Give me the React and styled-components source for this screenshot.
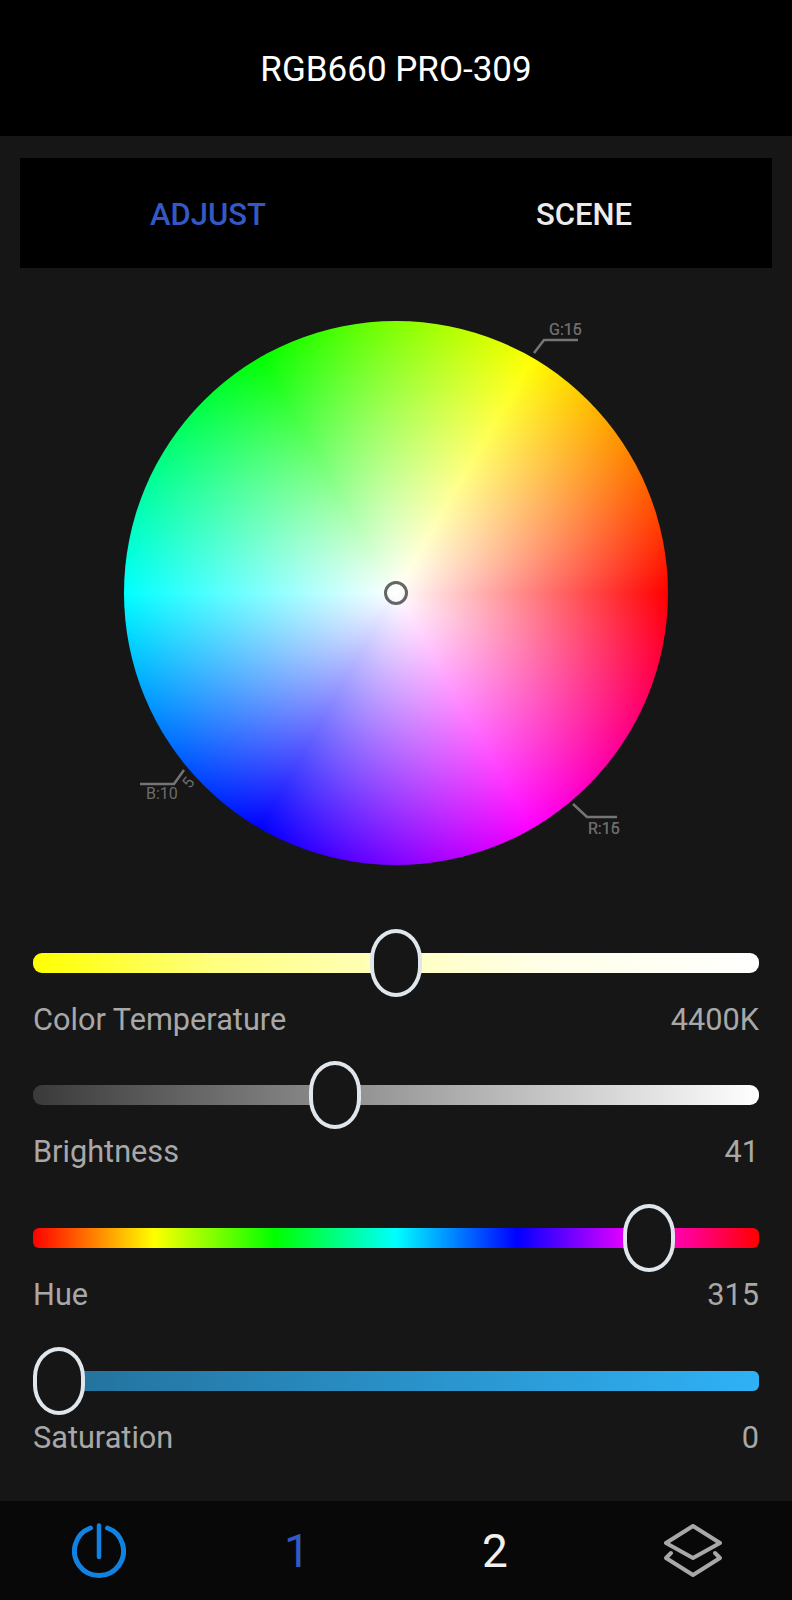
import styled, { createGlobalStyle } from 'styled-components';

const GlobalStyle = createGlobalStyle`
  html, body {
    margin: 0;
    padding: 0;
    background: #161616;
  }
  body {
    font-family: Roboto, "Liberation Sans", sans-serif;
  }
`;

const Page = styled.div`
  width: 792px;
  height: 1600px;
  display: flex;
  flex-direction: column;
  background: #161616;
  overflow: hidden;
`;

const Header = styled.header`
  height: 136px;
  box-sizing: border-box;
  padding-top: 2px;
  flex: none;
  display: flex;
  align-items: center;
  justify-content: center;
  background: #000;
  color: #fff;
  font-size: 35px;
  line-height: 1;
`;

const Tabs = styled.nav`
  flex: none;
  height: 110px;
  margin: 22px 20px 0;
  display: grid;
  grid-template-columns: 1fr 1fr;
  background: #000;
`;

const Tab = styled.div`
  display: flex;
  align-items: center;
  justify-content: center;
  padding-top: 2px;
  font-size: 31px;
  font-weight: 500;
  color: ${({ $active }) => ($active ? '#3359c6' : '#ececec')};
`;

const WheelStage = styled.section`
  position: relative;
  flex: none;
  height: 661px;
  padding-top: 53px;
  box-sizing: border-box;
  display: flex;
  justify-content: center;
  align-items: flex-start;
`;

const Wheel = styled.div`
  width: 544px;
  height: 544px;
  border-radius: 50%;
  display: flex;
  align-items: center;
  justify-content: center;
  background:
    radial-gradient(circle closest-side, #fff 0%, rgba(255, 255, 255, 0) 100%),
    conic-gradient(from 90deg, #f00, #f0f 60deg, #00f 120deg, #0ff 180deg, #0f0 240deg, #ff0 300deg, #f00 360deg);
`;

const WheelMarker = styled.div`
  width: 24px;
  height: 24px;
  box-sizing: border-box;
  border: 3px solid #666;
  border-radius: 50%;
`;

const Leaders = styled.svg`
  position: absolute;
  inset: 0;
  pointer-events: none;
`;

const Readout = styled.span`
  position: absolute;
  left: ${({ $x }) => $x}px;
  top: ${({ $y }) => $y}px;
  font-size: 16px;
  line-height: 18px;
  color: #6c6c6c;
  white-space: nowrap;
  ${({ $turned }) => ($turned ? 'transform: rotate(-52deg);' : '')}
`;

const Sliders = styled.section`
  flex: none;
  padding: 0 33px;
`;

const SliderBlock = styled.div`
  height: 132px;
  margin-top: ${({ $gap }) => $gap}px;
`;

const TrackArea = styled.div`
  position: relative;
  height: 68px;
  display: flex;
  align-items: center;
`;

const Track = styled.div`
  width: 100%;
  height: 20px;
  border-radius: ${({ $radius }) => $radius}px;
  background: ${({ $fill }) => $fill};
`;

const Thumb = styled.div`
  position: absolute;
  top: 0;
  width: 52px;
  height: 68px;
  box-sizing: border-box;
  border: 4px solid #dfe6ec;
  border-radius: 26px / 30px;
  background: #161616;
`;

const SliderLabel = styled.div`
  display: flex;
  justify-content: space-between;
  margin-top: 5px;
  font-size: 30.7px;
  line-height: 36px;
  color: #a8a8a8;
`;

const BottomBar = styled.footer`
  flex: none;
  margin-top: auto;
  height: 99px;
  display: grid;
  grid-template-columns: repeat(4, 1fr);
  background: #080808;
`;

const BarItem = styled.div`
  display: flex;
  align-items: center;
  justify-content: center;
  font-size: 46px;
  color: ${({ $color }) => $color};
`;

const sliders = [
  {
    name: 'Color Temperature',
    value: '4400K',
    position: 0.5,
    gap: 0,
    radius: 9,
    fill: 'linear-gradient(90deg, #ffff00 0%, #ffff80 25%, #ffffc0 50%, #ffffe8 70%, #ffffff 100%)',
  },
  {
    name: 'Brightness',
    value: '41',
    position: 0.41,
    gap: 0,
    radius: 9,
    fill: 'linear-gradient(90deg, #3a3a3a, #ffffff)',
  },
  {
    name: 'Hue',
    value: '315',
    position: 0.875,
    gap: 11,
    radius: 6,
    fill: 'linear-gradient(90deg, #f00, #ff0 16.67%, #0f0 33.33%, #0ff 50%, #00f 66.67%, #f0f 83.33%, #f00)',
  },
  {
    name: 'Saturation',
    value: '0',
    position: 0,
    gap: 11,
    radius: 6,
    fill: 'linear-gradient(90deg, #236f98, #2fb1f6)',
  },
];

const PowerIcon = () => (
  <svg width="54" height="56" viewBox="0 0 54 56" fill="none" stroke="#1282e2" strokeWidth="5" strokeLinecap="round">
    <path d="M18.5 5 A24.5 24.5 0 1 0 35.5 5" />
    <path d="M27 2.5 V34" strokeWidth="4.5" />
  </svg>
);

const LayersIcon = () => (
  <svg width="60" height="54" viewBox="0 0 60 54" fill="none" stroke="#a8a8a8" strokeWidth="4" strokeLinejoin="round" strokeLinecap="round">
    <path d="M30 2 L57 19 L30 34 L3 19 Z" />
    <path d="M8 29 L3 34 L30 51 L57 34 L52 29" />
  </svg>
);

const App = () => {
  return (
    <Page>
      <GlobalStyle />
      <Header>RGB660 PRO-309</Header>
      <Tabs>
        <Tab $active>ADJUST</Tab>
        <Tab>SCENE</Tab>
      </Tabs>
      <WheelStage>
        <Wheel>
          <WheelMarker />
        </Wheel>
        <Leaders width="792" height="661" viewBox="0 0 792 661" fill="none" stroke="#757575" strokeWidth="2.5">
          <path d="M534 85 L544 72 H578" />
          <path d="M184 502 L174 516 H140" />
          <path d="M573 536 L587 549 H617" />
        </Leaders>
        <Readout $x={549} $y={53}>G:15</Readout>
        <Readout $x={549} $y={53}>G:16</Readout>
        <Readout $x={146} $y={517}>B:10</Readout>
        <Readout $x={184} $y={506} $turned>5</Readout>
        <Readout $x={588} $y={552}>R:15</Readout>
        <Readout $x={588} $y={552}>R:16</Readout>
      </WheelStage>
      <Sliders>
        {sliders.map((slider) => (
          <SliderBlock key={slider.name} $gap={slider.gap}>
            <TrackArea>
              <Track $fill={slider.fill} $radius={slider.radius} />
              <Thumb style={{ left: `${slider.position * 674}px` }} />
            </TrackArea>
            <SliderLabel>
              <span>{slider.name}</span>
              <span>{slider.value}</span>
            </SliderLabel>
          </SliderBlock>
        ))}
      </Sliders>
      <BottomBar>
        <BarItem $color="#1282e2"><PowerIcon /></BarItem>
        <BarItem $color="#3359c6">1</BarItem>
        <BarItem $color="#f0f0f0">2</BarItem>
        <BarItem $color="#a8a8a8"><LayersIcon /></BarItem>
      </BottomBar>
    </Page>
  );
};

export default App;
